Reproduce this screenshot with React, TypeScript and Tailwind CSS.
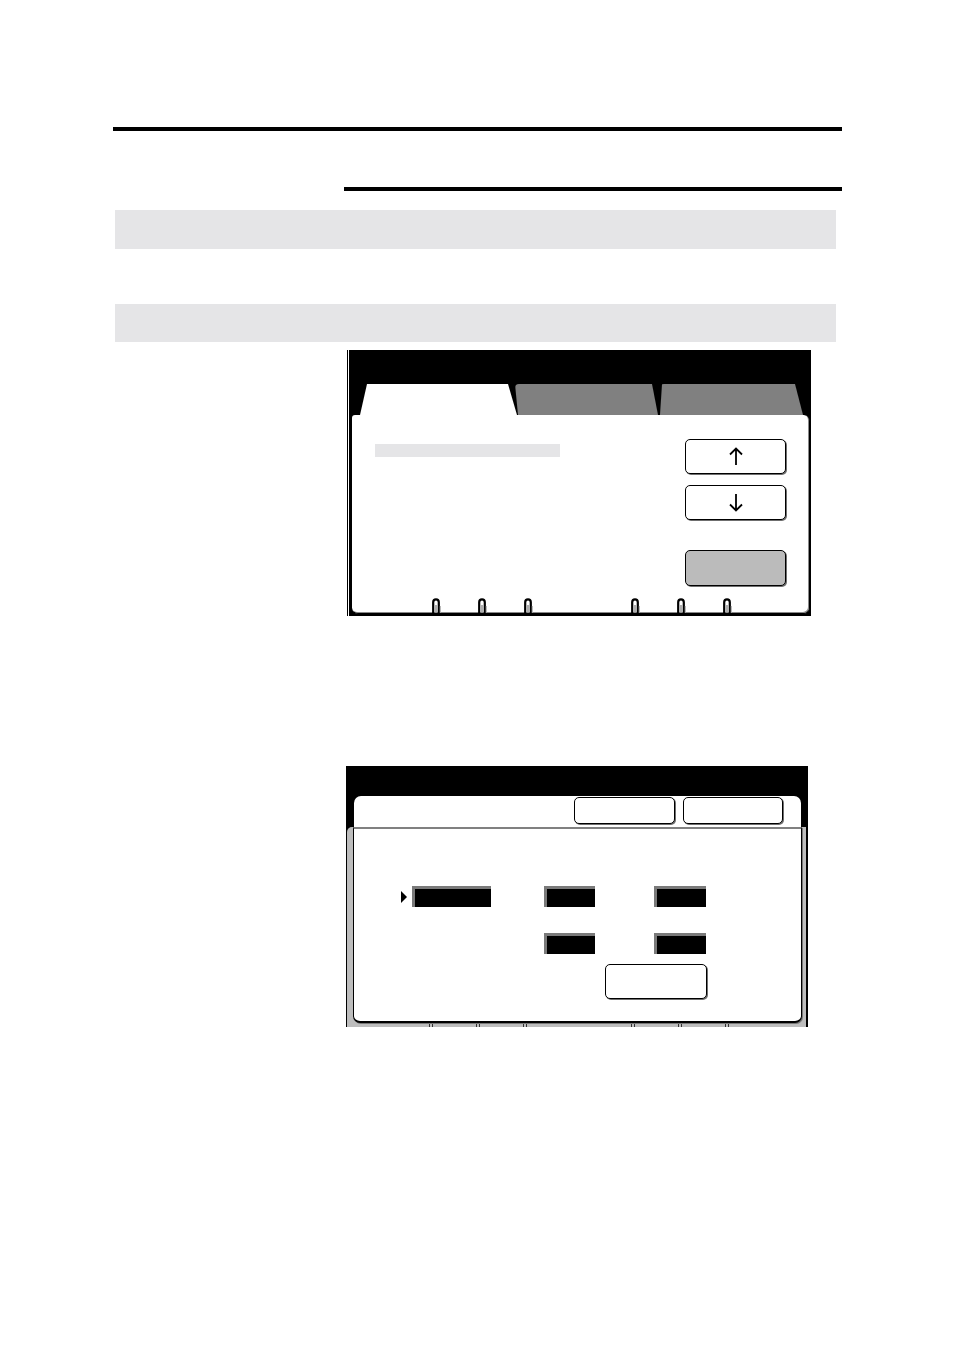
import React from 'react';

function Hook() {
  return (
    <svg width="10" height="16" viewBox="0 0 10 16" className="block">
      <path d="M2.2 16 V5.2 A2.8 2.8 0 0 1 7.8 5.2 V16" fill="none" stroke="#000" strokeWidth="2.2" />
      <path d="M5 8 V16" fill="none" stroke="#8c8c8c" strokeWidth="1.4" />
      <path d="M9.3 9 V16" fill="none" stroke="#a8a8a8" strokeWidth="1" />
    </svg>
  );
}

function Arrow({ down }: { down?: boolean }) {
  return (
    <svg width="14" height="19" viewBox="0 0 14 19" className="block">
      {down ? (
        <path d="M7 1 V17.5 M1 11.5 L7 17.5 L13 11.5" fill="none" stroke="#000" strokeWidth="1.8" />
      ) : (
        <path d="M7 18 V1.5 M1 7.5 L7 1.5 L13 7.5" fill="none" stroke="#000" strokeWidth="1.8" />
      )}
    </svg>
  );
}

function PanelButton({ className = '', children }: { className?: string; children?: React.ReactNode }) {
  return (
    <div
      className={`flex items-center justify-center rounded-[5px] border-[1.5px] border-black shadow-[1px_1px_0_#6f6f6f] ${className}`}
    >
      {children}
    </div>
  );
}

function Field({ w }: { w: string }) {
  return (
    <div className={`h-[21px] ${w} bg-black border-t-[3px] border-l-[3px] border-t-[#7a7a7a] border-l-[#7a7a7a]`} />
  );
}

function TabPanel() {
  return (
    <div className="ml-[347px] mt-[8px] w-[464px] h-[266px] bg-black shadow-[inset_1px_0_0_#000,inset_2px_0_0_#fff] flex flex-col">
      <div className="mt-[34px] h-[31px] flex">
        <div className="ml-[13px] w-[157px] h-full bg-white rounded-t-[4px] [clip-path:polygon(7px_0,148px_0,157px_100%,0_100%)]" />
        <div className="ml-[-2px] w-[143px] h-full bg-[#808080] rounded-t-[4px] [clip-path:polygon(0_0,137px_0,143px_100%,3px_100%)]" />
        <div className="ml-[2px] w-[143px] h-full bg-[#808080] rounded-t-[4px] [clip-path:polygon(2px_0,135px_0,143px_100%,0_100%)]" />
      </div>
      <div className="ml-[5px] w-[458px] h-[199px] bg-white rounded-[6px] rounded-tl-[3px] border-r border-b border-black shadow-[inset_-1px_-1px_0_#8a8a8a] flex flex-col">
        <div className="flex">
          <div className="flex-1 pl-[23px] pt-[29px]">
            <div className="w-[185px] h-[13px] bg-[#e5e5e7]" />
          </div>
          <div className="w-[101px] mr-[23px] pt-[24px] flex flex-col">
            <PanelButton className="h-[35px] bg-white">
              <Arrow />
            </PanelButton>
            <PanelButton className="h-[35px] mt-[11px] bg-white">
              <Arrow down />
            </PanelButton>
            <PanelButton className="h-[36px] mt-[30px] bg-[#bbbbbb]" />
          </div>
        </div>
        <div className="mt-auto flex items-end pl-[79px]">
          <Hook />
          <div className="ml-[36px]"><Hook /></div>
          <div className="ml-[36px]"><Hook /></div>
          <div className="ml-[97px]"><Hook /></div>
          <div className="ml-[36px]"><Hook /></div>
          <div className="ml-[36px]"><Hook /></div>
        </div>
      </div>
    </div>
  );
}

function Tick() {
  return (
    <div className="flex gap-[2px]">
      <div className="w-px h-[3px] bg-[#333]" />
      <div className="w-px h-[3px] bg-[#333]" />
    </div>
  );
}

function DialogPanel() {
  return (
    <div className="ml-[346px] mt-[150px] w-[462px] h-[261px] bg-black flex flex-col">
      <div className="mt-[30px] ml-[8px] w-[447px] h-[31px] bg-white rounded-t-[7px] flex pt-[1px]">
        <PanelButton className="ml-[220px] w-[101px] h-[27px] bg-white" />
        <PanelButton className="ml-[8px] w-[100px] h-[27px] bg-white" />
      </div>
      <div className="ml-[1px] w-[459px] h-[200px] bg-[#bdbdbd] rounded-tl-[5px] flex flex-col">
        <div className="ml-[6px] w-[449px] h-[196px] bg-white border-t-2 border-t-[#808080] border-x border-b-2 border-x-black border-b-black rounded-b-[7px] shadow-[1px_1px_0_#777] pt-[57px]">
          <div className="flex items-center">
            <div className="ml-[47px] w-0 h-0 border-y-[6px] border-y-transparent border-l-[6px] border-l-black" />
            <div className="ml-[5px]"><Field w="w-[79px]" /></div>
            <div className="ml-[53px]"><Field w="w-[51px]" /></div>
            <div className="ml-[59px]"><Field w="w-[52px]" /></div>
          </div>
          <div className="flex mt-[26px]">
            <div className="ml-[190px]"><Field w="w-[51px]" /></div>
            <div className="ml-[59px]"><Field w="w-[52px]" /></div>
          </div>
          <PanelButton className="ml-[251px] mt-[10px] w-[102px] h-[35px] bg-white" />
        </div>
        <div className="flex items-end h-[4px] pl-[82px]">
          <Tick />
          <div className="ml-[43px]"><Tick /></div>
          <div className="ml-[43px]"><Tick /></div>
          <div className="ml-[104px]"><Tick /></div>
          <div className="ml-[43px]"><Tick /></div>
          <div className="ml-[43px]"><Tick /></div>
        </div>
      </div>
    </div>
  );
}

export default function App() {
  return (
    <div className="w-[954px] h-[1351px] bg-white flex flex-col overflow-hidden">
      <div className="mt-[127px] ml-[113px] w-[729px] h-[4px] bg-black" />
      <div className="mt-[56px] ml-[344px] w-[498px] h-[4px] bg-black" />
      <div className="mt-[19px] ml-[115px] w-[721px] h-[39px] bg-[#e5e5e7]" />
      <div className="mt-[55px] ml-[115px] w-[721px] h-[38px] bg-[#e5e5e7]" />
      <TabPanel />
      <DialogPanel />
    </div>
  );
}
